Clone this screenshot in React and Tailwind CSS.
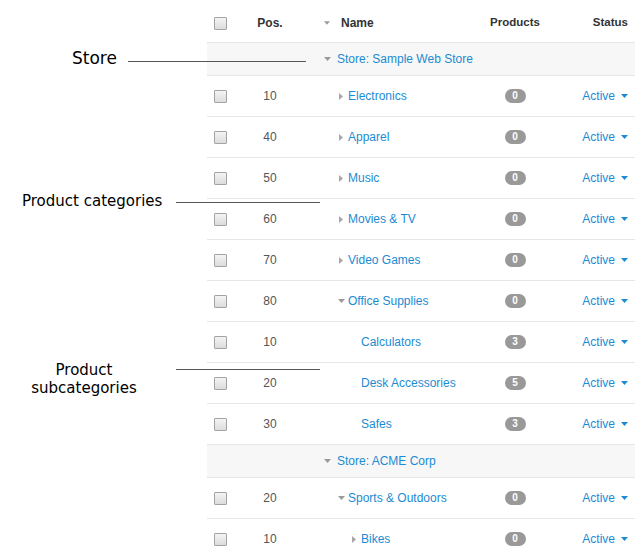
import React from "react";

const rows = [
  { type: "store", name: "Store: Sample Web Store" },
  { pos: "10", name: "Electronics", level: 1, arrow: "right", count: 0 },
  { pos: "40", name: "Apparel", level: 1, arrow: "right", count: 0 },
  { pos: "50", name: "Music", level: 1, arrow: "right", count: 0 },
  { pos: "60", name: "Movies & TV", level: 1, arrow: "right", count: 0 },
  { pos: "70", name: "Video Games", level: 1, arrow: "right", count: 0 },
  { pos: "80", name: "Office Supplies", level: 1, arrow: "down", count: 0 },
  { pos: "10", name: "Calculators", level: 2, arrow: null, count: 3 },
  { pos: "20", name: "Desk Accessories", level: 2, arrow: null, count: 5 },
  { pos: "30", name: "Safes", level: 2, arrow: null, count: 3 },
  { type: "store", name: "Store: ACME Corp" },
  { pos: "20", name: "Sports & Outdoors", level: 1, arrow: "down", count: 0 },
  { pos: "10", name: "Bikes", level: 2, arrow: "right", count: 0 },
];

function Down({ color = "#9a9a9a" }) {
  return (
    <svg width="7" height="4" viewBox="0 0 7 4" className="block">
      <path d="M0 0 L7 0 L3.5 4 Z" fill={color} />
    </svg>
  );
}

function Right() {
  return (
    <svg width="4" height="7" viewBox="0 0 4 7" className="block">
      <path d="M0 0 L4 3.5 L0 7 Z" fill="#a8a8a8" />
    </svg>
  );
}

function Checkbox() {
  return (
    <div className="w-[13px] h-[13px] border border-[#a3a3a3] bg-gradient-to-b from-[#f4f4f4] to-[#dcdcdc] rounded-[1px]" />
  );
}

const grid = "grid grid-cols-[33px_60px_179px_72px_84px] items-center";

export default function App() {
  return (
    <div
      className="relative w-[640px] h-[553px] overflow-hidden bg-white"
      style={{ fontFamily: '"Liberation Sans", Arial, sans-serif' }}
    >
      <div className="flex">
        <div className="w-[207px] shrink-0" />
        <div className="w-[428px] text-[12px]">
          {/* header */}
          <div className={`${grid} h-[43px] pt-[4px] border-b border-[#e6e6e6] text-[#333] font-bold`}>
            <div className="pl-[7px] pt-[1px]">
              <Checkbox />
            </div>
            <div className="text-center">Pos.</div>
            <div className="flex items-center pl-[24px]">
              <div className="w-[6px] mr-[11px] flex justify-center">
                <Down />
              </div>
              <span>Name</span>
            </div>
            <div className="text-center text-[11.5px]">Products</div>
            <div className="text-right pr-[7px] text-[11.5px]">Status</div>
          </div>
          {rows.map((r, i) =>
            r.type === "store" ? (
              <div
                key={i}
                className="h-[33px] bg-[#f7f7f7] border-b border-[#e6e6e6] flex items-center pl-[115px]"
              >
                <div className="w-[10px] mr-[5px] flex justify-center">
                  <Down />
                </div>
                <span className="text-[#1b8bd3]">{r.name}</span>
              </div>
            ) : (
              <div key={i} className={`${grid} h-[41px] border-b border-[#e6e6e6]`}>
                <div className="pl-[7px]">
                  <Checkbox />
                </div>
                <div className="text-center text-[#555]">{r.pos}</div>
                <div
                  className={`flex items-center ${r.level === 1 ? "pl-[36px]" : "pl-[49px]"}`}
                >
                  <div className="w-[10px] mr-[2px] flex justify-center">
                    {r.arrow === "right" && <Right />}
                    {r.arrow === "down" && <Down />}
                  </div>
                  <span className="text-[#1b8bd3]">{r.name}</span>
                </div>
                <div className="flex justify-center">
                  <span className="w-[21px] h-[14px] rounded-full bg-[#999] text-white text-[10px] font-bold flex items-center justify-center leading-none">
                    {r.count}
                  </span>
                </div>
                <div className="flex items-center justify-end pr-[7px] text-[#1b8bd3]">
                  <span>Active</span>
                  <span className="ml-[6px]">
                    <Down color="#1b8bd3" />
                  </span>
                </div>
              </div>
            )
          )}
        </div>
      </div>

      {/* annotations */}
      <div
        className="absolute inset-0 pointer-events-none text-black"
        style={{ fontFamily: '"DejaVu Sans", Verdana, sans-serif' }}
      >
        <div className="absolute left-[72px] top-[48px] text-[17px] leading-[20px]">Store</div>
        <div className="absolute left-[128px] top-[61px] w-[178px] h-px bg-[#555]" />
        <div className="absolute left-[22px] top-[192px] text-[15px] leading-[18px]">
          Product categories
        </div>
        <div className="absolute left-[176px] top-[202px] w-[144px] h-px bg-[#555]" />
        <div className="absolute left-[24px] top-[361px] w-[120px] text-center text-[15px] leading-[18px]">
          Product
          <br />
          subcategories
        </div>
        <div className="absolute left-[176px] top-[369px] w-[144px] h-px bg-[#555]" />
      </div>
    </div>
  );
}
